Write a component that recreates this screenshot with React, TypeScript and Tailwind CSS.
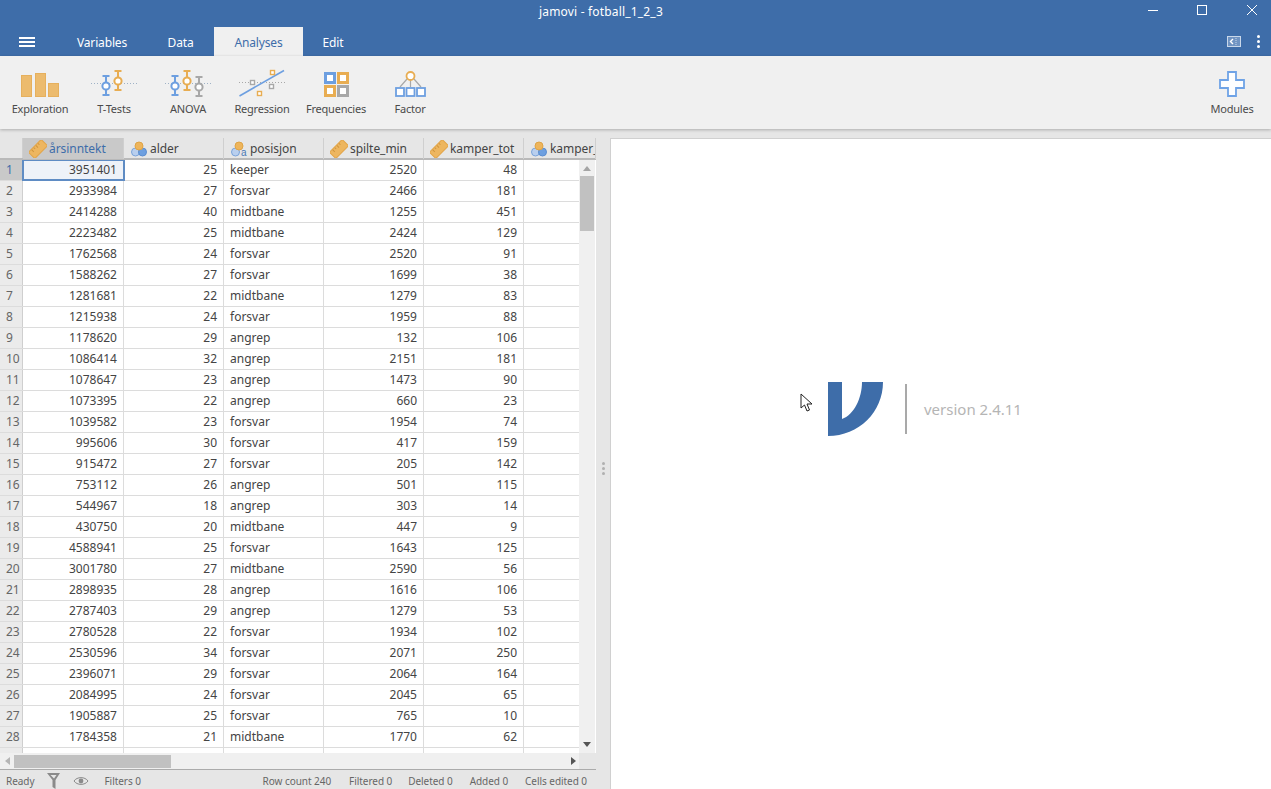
const rows: [number, number, string, number, number][] = [
  [3951401, 25, 'keeper', 2520, 48],
  [2933984, 27, 'forsvar', 2466, 181],
  [2414288, 40, 'midtbane', 1255, 451],
  [2223482, 25, 'midtbane', 2424, 129],
  [1762568, 24, 'forsvar', 2520, 91],
  [1588262, 27, 'forsvar', 1699, 38],
  [1281681, 22, 'midtbane', 1279, 83],
  [1215938, 24, 'forsvar', 1959, 88],
  [1178620, 29, 'angrep', 132, 106],
  [1086414, 32, 'angrep', 2151, 181],
  [1078647, 23, 'angrep', 1473, 90],
  [1073395, 22, 'angrep', 660, 23],
  [1039582, 23, 'forsvar', 1954, 74],
  [995606, 30, 'forsvar', 417, 159],
  [915472, 27, 'forsvar', 205, 142],
  [753112, 26, 'angrep', 501, 115],
  [544967, 18, 'angrep', 303, 14],
  [430750, 20, 'midtbane', 447, 9],
  [4588941, 25, 'forsvar', 1643, 125],
  [3001780, 27, 'midtbane', 2590, 56],
  [2898935, 28, 'angrep', 1616, 106],
  [2787403, 29, 'angrep', 1279, 53],
  [2780528, 22, 'forsvar', 1934, 102],
  [2530596, 34, 'forsvar', 2071, 250],
  [2396071, 29, 'forsvar', 2064, 164],
  [2084995, 24, 'forsvar', 2045, 65],
  [1905887, 25, 'forsvar', 765, 10],
  [1784358, 21, 'midtbane', 1770, 62],
]

const BLUE = '#6d9fe0'
const ORANGE = '#e8ad52'
const GRAY = '#a8a8a8'

function Ruler() {
  return (
    <svg width="18" height="18" viewBox="0 0 18 18" className="shrink-0">
      <g transform="rotate(-45 9 9)">
        <rect x="0" y="4.5" width="18" height="9" fill="#edb660" stroke="#e3a548" />
        <path d="M4 5v3M7 5v2M10 5v3M13 5v2" stroke="#d0963e" />
      </g>
    </svg>
  )
}

function Nominal({ text }: { text?: boolean }) {
  return (
    <svg width="18" height="18" viewBox="0 0 18 18" className="shrink-0">
      <circle cx="5.5" cy="12" r="4" fill="#b9cfee" stroke="#7ba4da" />
      {!text && <circle cx="12.5" cy="12" r="4" fill="#6d9fe0" stroke="#5a8dd0" />}
      <circle cx="9" cy="6" r="4" fill="#eeb55c" stroke="#dfa445" />
      {text && (
        <text x="11" y="16" fontSize="10" fill="#4a78b5" fontFamily="Liberation Sans, sans-serif">
          a
        </text>
      )}
    </svg>
  )
}

function ErrorBar({ x, y, color }: { x: number; y: number; color: string }) {
  return (
    <g stroke={color} strokeWidth="2" fill="none">
      <path d={`M${x - 3.5} ${y + 1}h7M${x} ${y + 1}v19M${x - 3.5} ${y + 20}h7`} />
      <circle cx={x} cy={y + 11} r="3.6" fill="#fff" />
    </g>
  )
}

function Dotted({ w }: { w: number }) {
  return <path d={`M0 13.5H${w}`} stroke="#9fb2c6" strokeDasharray="1 2" />
}

function Exploration() {
  return (
    <svg width="38" height="24" viewBox="0 0 38 24">
      <rect x="0.5" y="2.5" width="10" height="21" fill="#ecbb6e" stroke="#e6b05d" />
      <rect x="14.5" y="0.5" width="10" height="23" fill="#ecbb6e" stroke="#e6b05d" />
      <rect x="27.5" y="10.5" width="10" height="13" fill="#ecbb6e" stroke="#e6b05d" />
    </svg>
  )
}

function TTests() {
  return (
    <svg width="46" height="27" viewBox="0 0 46 27">
      <Dotted w={46} />
      <ErrorBar x={15} y={5} color={BLUE} />
      <ErrorBar x={27} y={0} color={ORANGE} />
    </svg>
  )
}

function Anova() {
  return (
    <svg width="46" height="27" viewBox="0 0 46 27">
      <Dotted w={46} />
      <ErrorBar x={10} y={5} color={BLUE} />
      <ErrorBar x={22} y={0} color={ORANGE} />
      <ErrorBar x={34} y={6} color={GRAY} />
    </svg>
  )
}

function Regression() {
  return (
    <svg width="46" height="28" viewBox="0 0 46 28">
      <path d="M0 13.5H46" stroke="#a8a8a8" strokeDasharray="1 2" />
      <path d="M0.5 27L45 1.5" stroke={BLUE} strokeWidth="1.6" />
      <rect x="31.5" y="1.5" width="4" height="4" fill="#fff" stroke={ORANGE} strokeWidth="1.4" />
      <rect x="11.5" y="11.5" width="4" height="4" fill="#fff" stroke={GRAY} strokeWidth="1.4" />
      <rect x="30.5" y="15.5" width="4" height="4" fill="#fff" stroke={GRAY} strokeWidth="1.4" />
      <rect x="18.5" y="22.5" width="4" height="4" fill="#fff" stroke={ORANGE} strokeWidth="1.4" />
    </svg>
  )
}

function Frequencies() {
  const cells: [number, number, string][] = [
    [0, 0, BLUE],
    [13, 0, ORANGE],
    [0, 13, ORANGE],
    [13, 13, GRAY],
  ]
  return (
    <svg width="25" height="25" viewBox="0 0 25 25">
      {cells.map(([x, y, c]) => (
        <rect key={`${x}-${y}`} x={x + 1.5} y={y + 1.5} width="9" height="9" fill="#fff" stroke={c} strokeWidth="3" />
      ))}
    </svg>
  )
}

function Factor() {
  return (
    <svg width="31" height="26" viewBox="0 0 31 26">
      <path d="M15.5 8V16M12 8L5 16M19 8L26 16" stroke={GRAY} strokeWidth="1.2" fill="none" />
      <circle cx="15.5" cy="5" r="4" fill="#fff" stroke={ORANGE} strokeWidth="1.8" />
      {[1, 11.5, 22].map((x) => (
        <rect key={x} x={x} y="17" width="8" height="8" fill="#fff" stroke={BLUE} strokeWidth="1.8" />
      ))}
    </svg>
  )
}

function Plus() {
  return (
    <svg width="26" height="26" viewBox="0 0 26 26">
      <path
        d="M9 1h8v8h8v8h-8v8H9v-8H1V9h8z"
        fill="#fdfeff"
        stroke="#6fa3e6"
        strokeWidth="1.8"
      />
    </svg>
  )
}

function RibbonButton({ label, children }: { label: string; children: React.ReactNode }) {
  return (
    <div className="w-[74px] h-[73px] flex flex-col items-center">
      <div className="h-[45px] flex items-end justify-center pb-[4px]">{children}</div>
      <span className="text-[11px] leading-[16px] tracking-[-0.2px] text-[#4b4b4b] whitespace-nowrap">{label}</span>
    </div>
  )
}

function Tab({ label, width, active }: { label: string; width: string; active?: boolean }) {
  return (
    <div
      className={`${width} h-[29px] flex items-center justify-center pt-[2px] text-[12px] tracking-[-0.15px] ${
        active ? 'bg-[#f0f0f0] text-[#3e6da9]' : 'text-white'
      }`}
    >
      {label}
    </div>
  )
}

function Header({ label, width, icon, active }: { label: string; width: string; icon: React.ReactNode; active?: boolean }) {
  return (
    <div
      className={`${width} h-[21px] flex items-center gap-[2px] pl-[6px] overflow-hidden border-r border-[#cfcfcf] text-[12px] tracking-[-0.05px] whitespace-nowrap ${
        active ? 'bg-[#c9c9c9] text-[#3e6da9]' : 'text-[#444]'
      }`}
    >
      {icon}
      {label}
    </div>
  )
}

function Row({ n, data }: { n: number; data?: [number, number, string, number, number] }) {
  const cell = 'w-[100px] shrink-0 border-r border-[#dcdcdc] px-[6px] leading-[20px]'
  return (
    <div className="h-[21px] flex border-b border-[#dcdcdc] text-[12px] text-[#444]">
      <div
        className={`w-[23px] shrink-0 pl-[6px] leading-[20px] border-r border-[#cfcfcf] ${
          n === 1 ? 'bg-[#c9c9c9] text-[#3e6da9]' : 'bg-[#ebebeb] text-[#666]'
        }`}
      >
        {data ? n : ''}
      </div>
      {data && (
        <>
          <div
            className={`${cell} text-right ${
              n === 1 ? 'w-[101px] outline-2 -outline-offset-1 outline-[#5f8cc4] bg-[#eef2f8]' : 'w-[101px]'
            }`}
          >
            {data[0]}
          </div>
          <div className={`${cell} text-right`}>{data[1]}</div>
          <div className={cell}>{data[2]}</div>
          <div className={`${cell} text-right`}>{data[3]}</div>
          <div className={`${cell} text-right`}>{data[4]}</div>
        </>
      )}
      {!data && (
        <>
          <div className="w-[101px] shrink-0 border-r border-[#dcdcdc]" />
          <div className="w-[100px] shrink-0 border-r border-[#dcdcdc]" />
          <div className="w-[100px] shrink-0 border-r border-[#dcdcdc]" />
          <div className="w-[100px] shrink-0 border-r border-[#dcdcdc]" />
          <div className="w-[100px] shrink-0 border-r border-[#dcdcdc]" />
        </>
      )}
    </div>
  )
}

export default function App() {
  return (
    <div
      className="relative w-[1271px] h-[789px] overflow-hidden bg-[#e6e6e6] flex flex-col"
      style={{ fontFamily: '"Noto Sans", "Open Sans", sans-serif' }}
    >
      {/* title + tabs */}
      <div className="h-[56px] shrink-0 bg-[#3e6da9] flex flex-col text-white">
        <div className="h-[27px] flex">
          <div className="ml-[539px] w-[123px] pt-[3px] text-[12px] leading-[18px] tracking-[0.18px] whitespace-nowrap">jamovi - fotball_1_2_3</div>
          <div className="ml-auto flex items-start">
            <svg width="124" height="20" viewBox="0 0 124 20">
              <path d="M1 10.5H11" stroke="#fff" />
              <rect x="50.5" y="5.5" width="9" height="9" fill="none" stroke="#fff" />
              <path d="M100 5l10 10M110 5L100 15" stroke="#fff" />
            </svg>
          </div>
        </div>
        <div className="h-[29px] flex items-center">
          <div className="w-[57px] flex justify-center pr-[3px]">
            <div className="w-[16px] h-[10px] flex flex-col justify-between">
              <div className="h-[2px] bg-white" />
              <div className="h-[2px] bg-white" />
              <div className="h-[2px] bg-white" />
            </div>
          </div>
          <Tab label="Variables" width="w-[90px]" />
          <Tab label="Data" width="w-[67px]" />
          <Tab label="Analyses" width="w-[89px]" active />
          <Tab label="Edit" width="w-[60px]" />
          <div className="ml-auto flex items-center gap-[10px] pr-[11px]">
            <svg width="14" height="11" viewBox="0 0 14 11">
              <rect x="0.5" y="0.5" width="13" height="10" fill="#6f93c2" stroke="#c9d8ea" />
              <path d="M6 3L3.5 5.5 6 8" stroke="#fff" strokeWidth="1.4" fill="none" />
              <path d="M9 2v7" stroke="#c9d8ea" strokeDasharray="1 1" />
            </svg>
            <div className="flex flex-col gap-[2px] ml-[6px]">
              <div className="w-[3px] h-[3px] rounded-full bg-white" />
              <div className="w-[3px] h-[3px] rounded-full bg-white" />
              <div className="w-[3px] h-[3px] rounded-full bg-white" />
            </div>
          </div>
        </div>
      </div>

      {/* ribbon */}
      <div className="h-[73px] shrink-0 bg-[#f0f0f0] flex pl-[3px] pr-[2px] shadow-[0_1px_3px_rgba(0,0,0,0.25)] z-10">
        <RibbonButton label="Exploration"><Exploration /></RibbonButton>
        <RibbonButton label="T-Tests"><TTests /></RibbonButton>
        <RibbonButton label="ANOVA"><Anova /></RibbonButton>
        <RibbonButton label="Regression"><Regression /></RibbonButton>
        <RibbonButton label="Frequencies"><Frequencies /></RibbonButton>
        <RibbonButton label="Factor"><Factor /></RibbonButton>
        <div className="ml-auto">
          <RibbonButton label="Modules"><Plus /></RibbonButton>
        </div>
      </div>

      {/* main area */}
      <div className="flex-1 flex pt-[9px] min-h-0">
        <div className="w-[596px] shrink-0 flex flex-col">
          <div className="h-[22px] shrink-0 flex border-b-2 border-[#b9b9b9]">
            <div className="w-[23px] border-r border-[#cfcfcf]" />
            <Header label="årsinntekt" width="w-[101px]" icon={<Ruler />} active />
            <Header label="alder" width="w-[100px]" icon={<Nominal />} />
            <Header label="posisjon" width="w-[100px]" icon={<Nominal text />} />
            <Header label="spilte_min" width="w-[100px]" icon={<Ruler />} />
            <Header label="kamper_tot" width="w-[100px]" icon={<Ruler />} />
            <Header label="kamper_" width="w-[72px]" icon={<Nominal />} />
          </div>

          <div className="h-[593px] shrink-0 flex bg-white">
            <div className="w-[579px] overflow-hidden">
              {rows.map((r, i) => (
                <Row key={i} n={i + 1} data={r} />
              ))}
              <Row n={29} />
            </div>
            {/* vertical scrollbar */}
            <div className="w-[16px] flex flex-col items-center bg-[#f0f0f0]">
              <div className="h-[16px] flex items-center justify-center">
                <div className="border-x-[4px] border-x-transparent border-b-[5px] border-b-[#a5a5a5]" />
              </div>
              <div className="w-[14px] h-[55px] bg-[#c1c1c1]" />
              <div className="mt-auto h-[17px] flex items-center justify-center">
                <div className="border-x-[4px] border-x-transparent border-t-[5px] border-t-[#555]" />
              </div>
            </div>
          </div>

          {/* horizontal scrollbar */}
          <div className="h-[16px] shrink-0 flex items-center bg-[#f0f0f0]">
            <div className="w-[14px] flex justify-center">
              <div className="border-y-[4px] border-y-transparent border-r-[5px] border-r-[#b5b5b5]" />
            </div>
            <div className="w-[157px] h-[13px] bg-[#c1c1c1]" />
            <div className="w-[408px] flex justify-end pr-[3px]">
              <div className="border-y-[4px] border-y-transparent border-l-[5px] border-l-[#555]" />
            </div>
            <div className="w-[17px] h-full bg-[#e6e6e6]" />
          </div>

          {/* status bar */}
          <div className="h-[20px] shrink-0 flex items-center border-t border-[#ababab] pl-[6px] text-[10px] tracking-[-0.05px] text-[#666] whitespace-nowrap">
            <span className="pt-[3px]">Ready</span>
            <svg width="16" height="18" viewBox="0 0 16 18" className="ml-[12px] mt-[2px]">
              <path d="M1 1h13L9.5 8v9l-3-2V8z" fill="#8a8a8a" />
              <path d="M4.5 3h6L8 6.5z" fill="#e6e6e6" />
            </svg>
            <svg width="16" height="10" viewBox="0 0 16 10" className="ml-[11px] mt-[2px]">
              <path d="M1 5C4 0.5 12 0.5 15 5 12 9.5 4 9.5 1 5z" fill="none" stroke="#8a8a8a" />
              <circle cx="8" cy="5" r="2.4" fill="#8a8a8a" />
            </svg>
            <span className="ml-[15px] pt-[3px]">Filters 0</span>
            <span className="ml-auto pt-[3px]">Row count 240</span>
            <span className="ml-[18px] pt-[3px]">Filtered 0</span>
            <span className="ml-[16px] pt-[3px]">Deleted 0</span>
            <span className="ml-[17px] pt-[3px]">Added 0</span>
            <span className="ml-[17px] mr-[9px] pt-[3px]">Cells edited 0</span>
          </div>
        </div>

        {/* splitter */}
        <div className="w-[14px] shrink-0 flex flex-col items-center justify-center gap-[2px] pt-[10px]">
          <div className="w-[3px] h-[3px] rounded-full bg-[#b0b0b0]" />
          <div className="w-[3px] h-[3px] rounded-full bg-[#b0b0b0]" />
          <div className="w-[3px] h-[3px] rounded-full bg-[#b0b0b0]" />
        </div>

        {/* results panel */}
        <div className="flex-1 bg-white border-t border-l border-[#d0d0d0] pl-[217px] pt-[243px]">
          <div className="flex items-start">
            <svg width="55" height="54" viewBox="0 0 55 54" className="shrink-0">
              <path d="M0 0H14V37C26 33 34 16 34 0H55C55 30 31 54 0 54Z" fill="#3e6da9" />
            </svg>
            <div className="w-[2px] h-[50px] mt-[2px] ml-[22px] bg-[#a9a9a9]" />
            <span className="ml-[17px] mt-[16px] text-[15px] leading-[22px] text-[#b5b5b5] whitespace-nowrap">version 2.4.11</span>
          </div>
        </div>
      </div>

      {/* mouse pointer */}
      <svg width="13" height="20" viewBox="0 0 13 20" className="absolute left-[800px] top-[393px]">
        <path d="M1 1V15L4.5 12 7 18 9.5 17 7 11H12Z" fill="#fff" stroke="#222" strokeWidth="1" />
      </svg>
    </div>
  )
}
